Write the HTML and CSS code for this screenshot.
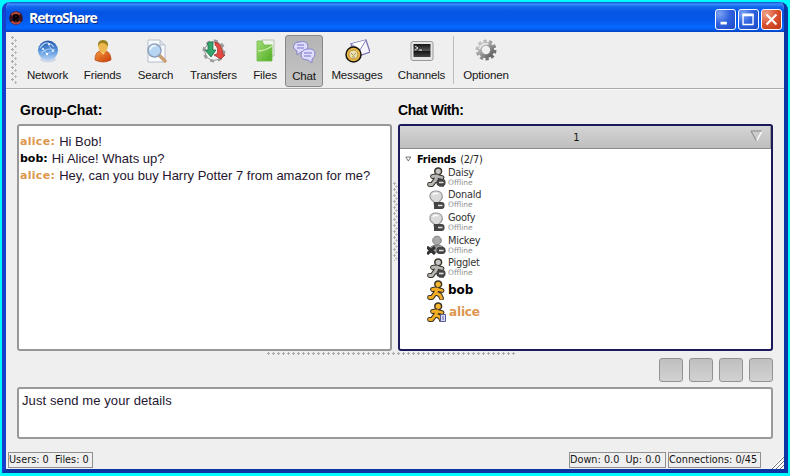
FILE: index.html
```html
<!DOCTYPE html>
<html lang="en">
<head>
<meta charset="utf-8">
<title>RetroShare</title>
<link rel="stylesheet" href="styles.css">
</head>
<body>
<svg class="defs" aria-hidden="true">
  <defs>
    <linearGradient id="blue" x2="0" y2="1"><stop stop-color="#2458a8"/><stop offset=".5" stop-color="#5594dc"/><stop offset="1" stop-color="#bcd7f5"/></linearGradient>
    <linearGradient id="orange" x2="1" y2="1"><stop stop-color="#f39a3c"/><stop offset="1" stop-color="#c93a08"/></linearGradient>
    <linearGradient id="green" x2="1" y2="1"><stop stop-color="#a5dc78"/><stop offset="1" stop-color="#4fae22"/></linearGradient>
    <linearGradient id="metal" x2="1" y2="1"><stop stop-color="#d0d0d0"/><stop offset="1" stop-color="#5c5c5c"/></linearGradient>
    <linearGradient id="screen" x2="0" y2="1"><stop stop-color="#151515"/><stop offset=".5" stop-color="#555"/><stop offset=".55" stop-color="#151515"/><stop offset="1" stop-color="#444"/></linearGradient>
    <g id="runner" stroke-linecap="round" stroke-linejoin="round">
      <path d="M10.500 9 8.500 13M9 9 5.500 9.500M11 9.500 15 10.500M8 13.500 5 17.500H2.500M9 13 13 15 14.500 18.300" fill="none" stroke="#3a3428" stroke-width="4.800"/>
      <circle cx="11.200" cy="4.300" r="3.400" stroke="#3a3428" stroke-width="1.500"/>
      <path d="M10.500 9 8.500 13M9 9 5.500 9.500M11 9.500 15 10.500M8 13.500 5 17.500H2.500M9 13 13 15 14.500 18.300" fill="none" stroke="currentColor" stroke-width="2.800"/>
    </g>
    <g id="minus"><rect x="9.500" y="12" width="9" height="7" rx="3" fill="#444"/><path d="M12 15.500h4.500" stroke="#ddd" stroke-width="1.700"/></g>
    <g id="bulb"><path d="M7 12C0 7 3 1 9 1s9 6 3 11v2H7z" fill="#dadada" stroke="#9a9a9a" stroke-width="1.200"/><path d="M6 5q2-3 5-1" stroke="#fff" stroke-width="1.500" fill="none"/><path d="M7 12v7h5v-7z" fill="#444"/><use href="#minus" x="-1"/></g>
  </defs>
</svg>
<div class="window">
  <header class="titlebar">
    <svg class="logo" viewBox="0 0 14 14"><circle cx="7" cy="7" r="6.800" fill="#3a1420"/><path d="M2.500 4Q6 0 11 3.500M2.500 10.500q4.500 4 9 0" stroke="#b8483e" stroke-width="2" fill="none"/><path d="M5 10V4.500h3q2 0 1 2.500L6 7.500l3.500 2.500" fill="none" stroke="#050505" stroke-width="1.800"/></svg>
    <span class="title">RetroShare</span>
    <div class="controls">
      <svg class="ctl" viewBox="0 0 21 21"><path d="M5 14.500h7" stroke="#fff" stroke-width="3"/></svg>
      <svg class="ctl" viewBox="0 0 21 21"><path d="M4.500 5v11h11V5" stroke="#fff" stroke-width="1.500" fill="none"/><path d="M3.800 5.500h12.400" stroke="#fff" stroke-width="3"/></svg>
      <svg class="ctl close" viewBox="0 0 21 21"><path d="m5 5 11 11m0-11-11 11" stroke="#fff" stroke-width="2.300"/></svg>
    </div>
  </header>

  <nav class="toolbar">
    <span class="grip"></span>
    <a class="tool network"><svg viewBox="0 0 24 24"><ellipse cx="12" cy="20.500" rx="8" ry="3" fill="#cfd8e6"/><circle cx="12" cy="11.500" r="10" fill="url(#blue)"/><path d="M4 9q4-6 8-5t6 4M5 14q7-6 14-3" fill="none" stroke="#a9cdf3" stroke-width="1.200"/><path d="m8 11 3 4 5-3M12 5l4 6" stroke="#d8eaff" fill="none" stroke-width=".6"/><g fill="#fff"><circle cx="7" cy="10" r="1"/><circle cx="11" cy="15" r="1.200"/><circle cx="17" cy="12" r="1"/><circle cx="13" cy="5" r="1"/></g></svg><span>Network</span></a>
    <a class="tool friends"><svg viewBox="0 0 24 24"><path d="M4 21q0-8 5-9h6q5 2 5 9-8 4-16 0z" fill="url(#orange)" stroke="#b7410e" stroke-width=".7"/><path d="m9 12 3 4 3-4" fill="#f8c66d"/><ellipse cx="12" cy="7.500" rx="4.700" ry="5.500" fill="#edb94e"/><path d="M7 8Q6 1 12 1t5 7q-2-4-6-4-3 0-4 4" fill="#9b8322"/></svg><span>Friends</span></a>
    <a class="tool search"><svg viewBox="0 0 24 24"><path d="M4 1h12l5 5v17H4z" fill="#f9fbff" stroke="#b5bdca"/><path d="M16 1v5h5" fill="#dfe5ee" stroke="#b5bdca"/><path d="m15 16 6 6" stroke="#c9a071" stroke-width="3.500" stroke-linecap="round"/><circle cx="10.500" cy="11.500" r="6.500" fill="#b5d5f3" stroke="#8fa2bc" stroke-width="1.500"/><path d="M6 11q1-5 6-4" stroke="#e6f4ff" stroke-width="2" fill="none"/></svg><span>Search</span></a>
    <a class="tool transfers"><svg viewBox="0 0 24 24"><circle cx="12" cy="12" r="9" fill="#f5f5f5" stroke="#888" stroke-width="1.300"/><circle cx="12" cy="12" r="10.300" fill="none" stroke="#999" stroke-width="2.300" stroke-dasharray="4 4"/><circle cx="12" cy="12" r="8.700" fill="#f3f3f3"/><path d="M5 5q2-3 6-2v8h3l-5 7-6-7h3V6z" fill="#35a66b" stroke="#16633c" stroke-width=".7"/><path d="M13 3q7 1 8 13h2l-4 4-7-4 3-1q2-6-2-9z" fill="#e24a43" stroke="#9d2522" stroke-width=".7"/></svg><span>Transfers</span></a>
    <a class="tool files"><svg viewBox="0 0 24 24"><path d="M9 1h12v16H9z" fill="#eef4ea" stroke="#b6c3ae"/><path d="M4 2h5l2 4h8v16H4z" fill="url(#green)" stroke="#70bd4a" stroke-width=".8"/><path d="M5 12q7 0 14-5" stroke="#c7edac" stroke-width="1.500" fill="none"/></svg><span>Files</span></a>
    <a class="tool chat active"><svg viewBox="0 0 24 24"><g fill="#dedcff" stroke="#8583c5"><path d="M7 2q8-2 9 4 0 6-7 6l-4 3v-4Q0 8 2 5q1-3 5-3z"/><path d="M15 9q8-1 8 5 0 3-3 5v4l-4-3q-7 0-7-5 0-5 6-6z"/></g><path d="M5 5h7M5 8h7M12 13h8M12 16h7" stroke="#7675bc"/></svg><span>Chat</span></a>
    <a class="tool messages"><svg viewBox="0 0 26 24"><path d="m7 5 15-4 4 12-14 5z" fill="#f5f4ff" stroke="#7772b2" stroke-width="1.300"/><path d="m7 5 9 6 6-10" fill="#fff" stroke="#8580bc"/><circle cx="9.500" cy="15.500" r="7.500" fill="#eab948" stroke="#191307" stroke-width="1.500"/><circle cx="9.500" cy="15.500" r="4.500" fill="#e9dfb0" stroke="#b98d30"/><path d="m7 14 2.500 2.500L12 14M8 18h3" fill="none" stroke="#a8975c"/></svg><span>Messages</span></a>
    <a class="tool channels"><svg viewBox="0 0 24 24"><rect x="1" y="2.500" width="22" height="19" rx="2" fill="#e6e6e6" stroke="#999"/><rect x="3.500" y="5" width="17" height="13" fill="url(#screen)"/><path d="m5 7 3 2-3 2M9 11h3" stroke="#eee" fill="none"/></svg><span>Channels</span></a>
    <span class="separator"></span>
    <a class="tool options"><svg viewBox="0 0 24 24"><circle cx="12" cy="11" r="9" fill="none" stroke="url(#metal)" stroke-width="3" stroke-dasharray="3.200 2.450"/><circle cx="12" cy="11" r="6.200" fill="none" stroke="url(#metal)" stroke-width="4"/><path d="M5.500 10q2-6 9-5" stroke="#eee" stroke-width="1.500" fill="none"/></svg><span>Optionen</span></a>
  </nav>

  <main class="content">
    <div class="panes">
      <section class="group">
        <h2 class="group-title">Group-Chat:</h2>
        <div class="log">
          <p><b class="nick alice">alice:</b><span class="msg">Hi Bob!</span></p>
          <p><b class="nick">bob:</b><span class="msg">Hi Alice! Whats up?</span></p>
          <p><b class="nick alice">alice:</b><span class="msg">Hey, can you buy Harry Potter 7 from amazon for me?</span></p>
        </div>
      </section>
      <div class="vsplit"></div>
      <section class="contacts">
        <h2 class="with-title">Chat With:</h2>
        <div class="tree">
          <div class="tree-head"><span>1</span><svg class="sort" viewBox="0 0 13 12"><path d="M12 1 6.500 11" stroke="#fff" fill="none" stroke-width="1.500"/><path d="M12 1H1l5.500 10" stroke="#858585" fill="none"/></svg></div>
          <div class="branch"><svg class="arrow" viewBox="0 0 7 6"><path d="M.8 1h5L3.300 5z" fill="#fff" stroke="#555" stroke-width=".8"/></svg><b>Friends</b><span>(2/7)</span></div>
          <div class="buddy"><svg class="gray" viewBox="0 0 20 20"><use href="#runner"/><use href="#minus"/></svg><div><span class="n">Daisy</span><small>Offline</small></div></div>
          <div class="buddy"><svg viewBox="0 0 20 20"><use href="#bulb"/></svg><div><span class="n">Donald</span><small>Offline</small></div></div>
          <div class="buddy"><svg viewBox="0 0 20 20"><use href="#bulb"/></svg><div><span class="n">Goofy</span><small>Offline</small></div></div>
          <div class="buddy"><svg viewBox="0 0 20 20"><path d="M2 17q0-7 8-7t8 7z" fill="#999" stroke="#777"/><circle cx="10" cy="5.500" r="4.300" fill="#aaa" stroke="#808080"/><path d="m0 12 8 7m0-7-8 7" stroke="#333" stroke-width="3"/><use href="#minus"/></svg><div><span class="n">Mickey</span><small>Offline</small></div></div>
          <div class="buddy"><svg class="gray" viewBox="0 0 20 20"><use href="#runner"/><use href="#minus"/></svg><div><span class="n">Pigglet</span><small>Offline</small></div></div>
          <div class="buddy online"><svg class="gold" viewBox="0 0 20 20"><use href="#runner"/></svg><b>bob</b></div>
          <div class="buddy online last"><svg class="gold" viewBox="0 0 20 20"><use href="#runner"/><path d="M13.500 12.500h5v7h-5z" fill="#d9dcf5" stroke="#555b96"/><path d="M15 15h2M15 17h2" stroke="#6268a8"/></svg><b class="alice">alice</b></div>
        </div>
      </section>
    </div>
    <div class="hsplit"></div>
    <div class="actions"><button></button><button></button><button></button><button></button></div>
    <div class="input">Just send me your details</div>
  </main>

  <footer class="status">
    <span class="cell users">Users: 0&nbsp; Files: 0</span>
    <span class="cell rate">Down: 0.0&nbsp; Up: 0.0</span>
    <span class="cell conn">Connections: 0/45</span>
    <svg class="resize" viewBox="0 0 13 13"><path d="M1 13 13 1M5 13l8-8M9 13l4-4" stroke="#fff" stroke-width="2.500"/><path d="M1 13 13 1M5 13l8-8M9 13l4-4" stroke="#777"/></svg>
  </footer>
</div>
</body>
</html>
```

FILE: styles.css
```css
* { box-sizing: border-box; }
html, body { margin: 0; height: 476px; overflow: hidden; }
body { background: #00f8ff; padding: 2px 2px 3px; font-family: "Liberation Sans", sans-serif; color: #151515; }
.defs { position: absolute; width: 0; height: 0; }
.window { height: 471px; display: flex; flex-direction: column; background: #efefef; border: solid #0b35a4; border-width: 0 4px 4px; border-left-color: #1440cc; border-radius: 8px 8px 0 0; overflow: hidden; }

.titlebar { height: 30px; margin: 0 -4px; padding: 0 6px 0 7px; display: flex; align-items: center; flex: none; background: linear-gradient(#0a4fd0 0, #3b8efa 2px, #1267ee 5px, #0555e3 10px, #0558ea 18px, #0567ff 25px, #0560f5 27px, #0340c0 30px); }
.logo { width: 14px; height: 14px; margin-top: 1px; }
.title { margin: 2px 0 0 6px; font: bold 14px/18px "Open Sans", "Noto Sans", sans-serif; color: #fff; text-shadow: 1px 1px #0a2a80; letter-spacing: -1.1px; }
.controls { margin: 4px 0 0 auto; display: flex; gap: 2px; }
.ctl { width: 21px; height: 21px; border: 1px solid #fff; border-radius: 3px; background: radial-gradient(circle at 20% 20%, #7ba3f5, #3264df 45%, #1a46c6); }
.ctl.close { background: radial-gradient(circle at 20% 20%, #f0a088, #da5130 50%, #bd3514); }

.toolbar { height: 57px; flex: none; display: flex; border-bottom: 1px solid #aaa; box-shadow: 0 1px #fafafa; }
.grip { width: 6px; height: 48px; margin: 4px 3px 0 5px; flex: none; background: radial-gradient(circle at 1.500px 1.500px, #aaa 1px, transparent 1.300px) 0 0/8px 6px, radial-gradient(circle at 4.500px 4.500px, #bbb 1px, transparent 1.300px) 0 0/8px 6px; }
.tool { flex: none; display: flex; flex-direction: column; align-items: center; padding-top: 7px; font-size: 11.500px; line-height: 14px; letter-spacing: -.15px; }
.tool svg { width: 24px; height: 24px; margin-bottom: 5px; }
.network { width: 55px; }
.friends { width: 55px; }
.search { width: 51px; }
.transfers { width: 65px; }
.files { width: 38px; }
.chat { width: 38px; height: 52px; margin: 3px 0 0 1px; padding-top: 4px; }
.active { background: linear-gradient(#b4b4b4, #c5c5c5); border: 1px solid #888; border-radius: 3px; }
.messages { width: 68px; }
.messages svg { width: 26px; }
.channels { width: 61px; }
.separator { width: 1px; margin: 4px 3px 4px 1px; background: #bcbcbc; }
.options { width: 58px; }

.content { height: 350px; flex: none; padding: 12px 11px 0; }
.panes { display: flex; height: 250px; }
h2 { margin: 0; height: 23px; color: #000; }
.group { width: 375px; }
.group-title { font: bold 14px/18px "Liberation Sans", sans-serif; padding-left: 3px; }
.with-title { font: bold 14px/18px "Liberation Sans", sans-serif; letter-spacing: -.45px; }
.log { height: 227px; background: #fff; border: 2px solid #979797; border-radius: 3px; padding: 7px 1px; }
.log p { margin: 0; height: 17px; display: flex; align-items: center; white-space: nowrap; }
.nick { font: bold 11px/17px "DejaVu Sans", sans-serif; color: #000; }
.log .alice { letter-spacing: .3px; }
.alice, .log .alice { color: #dc964e; }
.msg { margin-left: 4px; font-size: 13px; line-height: 17px; color: #251530; }
.vsplit { width: 6px; margin: 81px 0 90px; background: radial-gradient(circle at 1.500px 1.500px, #b4b4b4 1px, transparent 1.300px) 1px 0/8px 6px, radial-gradient(circle at 3.500px 4.500px, #c4c4c4 1px, transparent 1.300px) 1px 0/8px 6px; }
.contacts { width: 375px; }
.tree { height: 227px; background: #fff; border: 2px solid #19195c; border-radius: 3px; font-family: "DejaVu Sans", sans-serif; }
.tree-head { height: 23px; display: flex; justify-content: center; align-items: center; position: relative; font-size: 10px; background: linear-gradient(#d5d5d5, #bebebe); border-right: 1px solid #999; border-bottom: 1px solid #8b8b8b; }
.tree-head span { margin-right: 17px; }
.sort { position: absolute; right: 7px; top: 4px; width: 13px; height: 12px; }
.branch { height: 18px; display: flex; align-items: center; font-size: 9.700px; letter-spacing: -.15px; padding: 2px 0 0 5px; margin-bottom: -1px; color: #222; }
.branch b { margin: 0 4px 0 5px; color: #000; }
.arrow { width: 7px; height: 6px; }
.buddy { height: 22.600px; padding-left: 27px; display: flex; align-items: center; color: #333; }
.buddy svg { width: 20px; height: 20px; margin-right: 1px; flex: none; }
.buddy > div { display: flex; flex-direction: column; }
.buddy .n { font-size: 9.800px; line-height: 11px; letter-spacing: -.25px; }
.buddy small { font-size: 7.500px; line-height: 10px; color: #909090; }
.online { font-size: 12px; color: #000; }
.last { height: 21px; }
.last b { margin-left: 1px; letter-spacing: -.15px; }
.gray { color: #b7b7b7; fill: #c4c4c4; }
.gold { color: #f5ad24; fill: #f5b52e; }

.hsplit { height: 6px; width: 250px; margin: 1px auto 0 250px; background: radial-gradient(circle at 1.500px 1.500px, #aaa 1px, transparent 1.300px) 0 0/5px 6px repeat-x; }
.actions { display: flex; justify-content: flex-end; gap: 6px; height: 29px; }
.actions button { width: 24px; height: 24px; border: 1px solid #929292; border-radius: 3px; background: linear-gradient(#bfbfbf, #d2d2d2); padding: 0; }
.input { height: 52px; background: #fff; border: 2px solid #999; border-radius: 3px; padding: 3px 3px; font-size: 13px; line-height: 17px; letter-spacing: .1px; color: #251530; }

.status { flex: 1; display: flex; align-items: flex-start; padding: 13px 0 0 2px; font: 10.800px/14px "DejaVu Sans Condensed", "DejaVu Sans", sans-serif; font-stretch: condensed; }
.cell { height: 16px; border: 1px solid #909090; white-space: nowrap; color: #151515; }
.users { width: 85px; }
.rate { width: 97px; margin-left: auto; }
.conn { width: 93px; margin-left: 2px; }
.resize { width: 13px; height: 13px; margin: 4px 0 0 10px; }
```
